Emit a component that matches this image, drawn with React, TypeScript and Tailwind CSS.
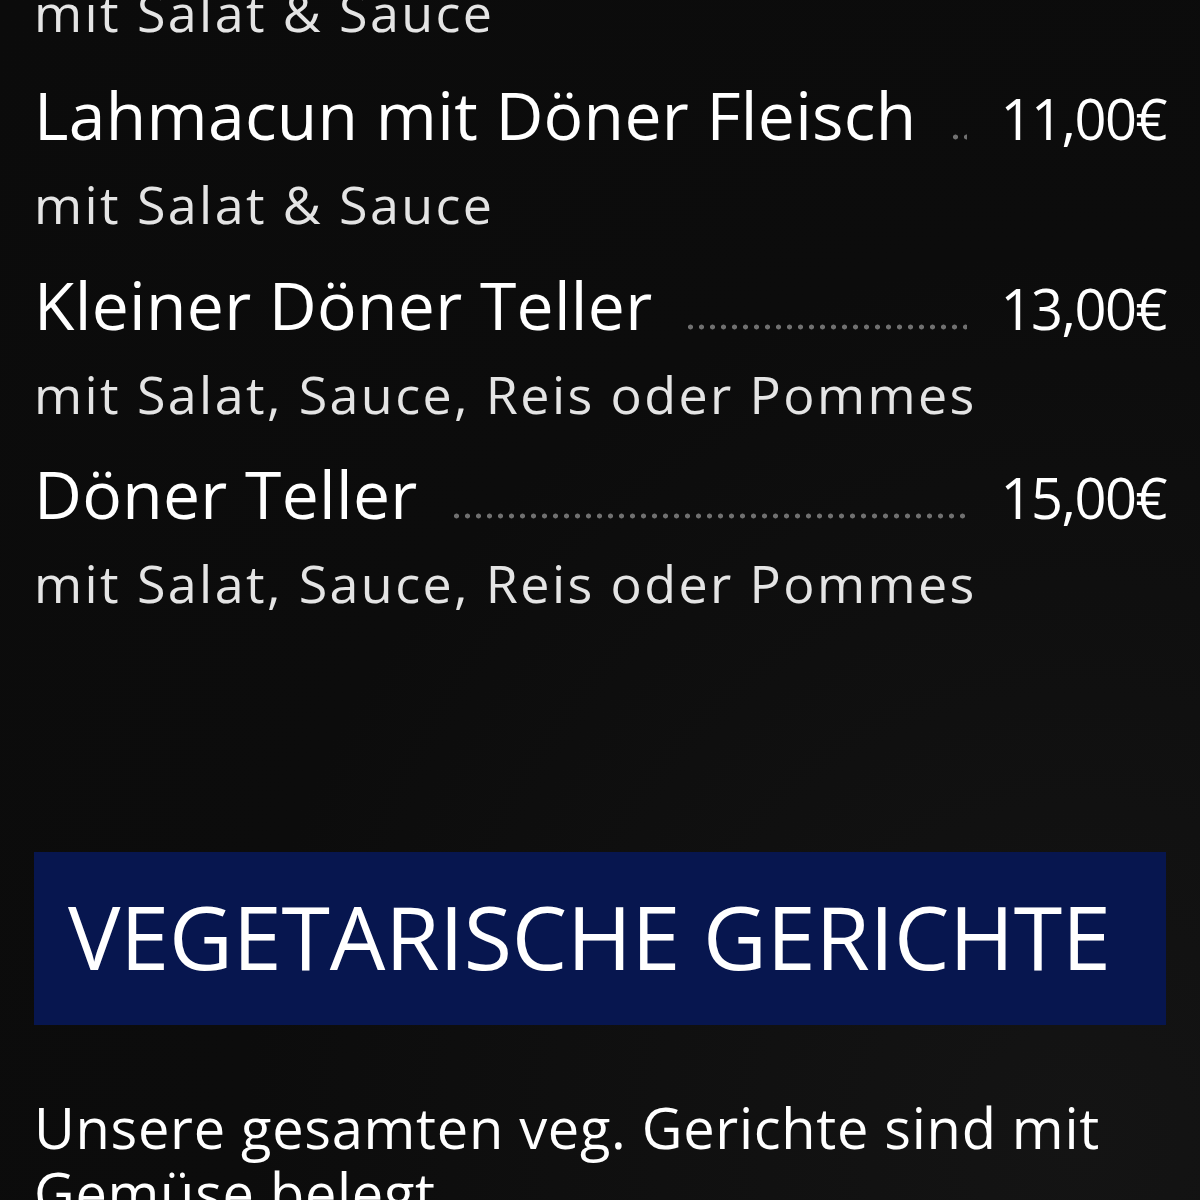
import React from 'react';

interface Dish {
  name: string;
  price: string;
  note: string;
}

const dishes: Dish[] = [
  { name: 'Lahmacun mit Döner Fleisch', price: '11,00€', note: 'mit Salat & Sauce' },
  { name: 'Kleiner Döner Teller', price: '13,00€', note: 'mit Salat, Sauce, Reis oder Pommes' },
  { name: 'Döner Teller', price: '15,00€', note: 'mit Salat, Sauce, Reis oder Pommes' },
];

function DishRow({ dish }: { dish: Dish }) {
  return (
    <div className="mb-[13px]">
      <div className="flex items-baseline">
        <span className="text-[66px] leading-[80px] text-white whitespace-nowrap tracking-[0.3px]">{dish.name}</span>
        {/* dotted leader */}
        <div className="flex-1 mx-[33px] h-[6px] mb-[0px] bg-[radial-gradient(circle,#707070_2.2px,transparent_2.8px)] bg-[length:11px_6px] bg-repeat-x" />
        <span className="text-[56px] leading-[80px] text-white whitespace-nowrap tracking-[-1.5px]">{dish.price}</span>
      </div>
      <p className="text-[52px] leading-[92.8px] text-[#e4e4e4] tracking-[2.4px]">{dish.note}</p>
    </div>
  );
}

export default function App() {
  return (
    <div
      className="w-[1200px] h-[1200px] overflow-hidden bg-[radial-gradient(ellipse_at_90%_95%,#141414_0%,#0c0c0c_55%,#0b0b0b_100%)]"
      style={{ fontFamily: '"Open Sans", "Liberation Sans", sans-serif' }}
    >
      <div className="px-[34px] -mt-[34px]">
        <p className="text-[52px] leading-[92.8px] text-[#e4e4e4] tracking-[2.4px] mb-[15px]">mit Salat &amp; Sauce</p>
        {dishes.map((d) => (
          <DishRow key={d.name} dish={d} />
        ))}

        <div className="mt-[222px] bg-[#07164f] pl-[34px] pt-[24px] pb-[29px]">
          <h2 className="text-[88px] leading-[120px] text-white whitespace-nowrap tracking-[-0.2px]">VEGETARISCHE GERICHTE</h2>
        </div>

        <p className="mt-[70px] text-[56px] leading-[65px] text-white tracking-[0.7px]">
          Unsere gesamten veg. Gerichte sind mit Gemüse belegt
        </p>
      </div>
    </div>
  );
}
